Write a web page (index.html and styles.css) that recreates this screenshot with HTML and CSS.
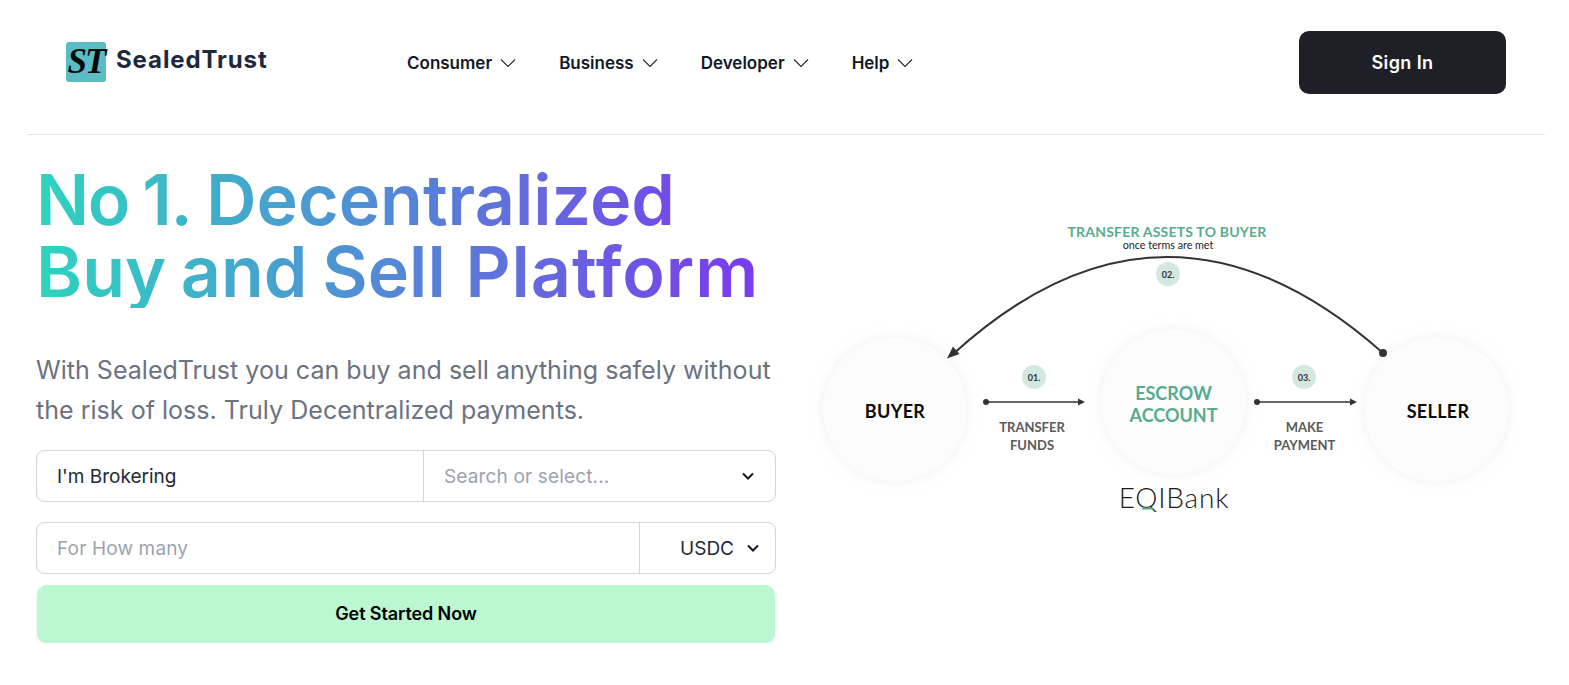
FILE: index.html
```html
<!DOCTYPE html>
<html lang="en">
<head>
    <meta charset="UTF-8">
    <meta name="viewport" content="width=device-width, initial-scale=1.0">
    <title>SealedTrust</title>
    <link rel="stylesheet" href="styles.css">
</head>
<body>
    <header class="header">
        <a class="brand" href="#">
            <span class="brand-mark">ST</span>
            <span class="brand-name">SealedTrust</span>
        </a>
        <nav class="nav">
            <a class="nav-item" href="#">Consumer
                <svg class="nav-chevron" viewBox="0 0 16 16"><path d="M1 4.5l7 7 7-7"/></svg>
            </a>
            <a class="nav-item" href="#">Business
                <svg class="nav-chevron" viewBox="0 0 16 16"><path d="M1 4.5l7 7 7-7"/></svg>
            </a>
            <a class="nav-item" href="#">Developer
                <svg class="nav-chevron" viewBox="0 0 16 16"><path d="M1 4.5l7 7 7-7"/></svg>
            </a>
            <a class="nav-item" href="#">Help
                <svg class="nav-chevron" viewBox="0 0 16 16"><path d="M1 4.5l7 7 7-7"/></svg>
            </a>
        </nav>
        <button class="sign-in">Sign In</button>
    </header>

    <main class="hero">
        <section class="hero-left">
            <h1 class="hero-title"><span class="title-tight">No 1.</span> Decentralized<br>Buy and Sell <span class="title-wide">Platform</span></h1>
            <p class="hero-text">With SealedTrust you can buy and sell anything safely without the risk of loss. Truly Decentralized payments.</p>

            <div class="field-row">
                <input class="field-input field-half" type="text" value="I'm Brokering">
                <div class="field-select">
                    <input class="field-input" type="text" placeholder="Search or select...">
                    <svg class="select-chevron" viewBox="0 0 14 14"><path d="M2 4.5l5 5 5-5"/></svg>
                </div>
            </div>
            <div class="field-row field-row-second">
                <input class="field-input" type="text" placeholder="For How many">
                <div class="field-currency">USDC
                    <svg class="select-chevron" viewBox="0 0 14 14"><path d="M2 4.5l5 5 5-5"/></svg>
                </div>
            </div>
            <button class="start-btn">Get Started Now</button>
        </section>

        <svg class="diagram" viewBox="810 210 710 310">
            <defs>
                <filter id="soft" x="-20%" y="-20%" width="140%" height="140%">
                    <feDropShadow dx="0" dy="0" stdDeviation="6" flood-color="#d8ebe5" flood-opacity="0.6"/>
                </filter>
            </defs>

            <circle class="node" cx="895" cy="409.5" r="72"/>
            <circle class="node" cx="1173.5" cy="402" r="72.5"/>
            <circle class="node" cx="1436.5" cy="409.5" r="72"/>

            <path class="line-arc" d="M952 355Q1165 160 1383 353"/>
            <path class="line-head" d="M947 358.5l6-12 6.500 7.500z"/>
            <circle class="line-head" cx="1383" cy="353" r="4"/>

            <path class="line-flow" d="M986 402H1081"/>
            <circle class="line-head" cx="986" cy="402" r="3"/>
            <path class="line-head" d="M1085 402l-7-3.500v7z"/>

            <path class="line-flow" d="M1257 402H1353"/>
            <circle class="line-head" cx="1257" cy="402" r="3"/>
            <path class="line-head" d="M1357 402l-7-3.500v7z"/>

            <circle class="badge" cx="1034" cy="377" r="12"/>
            <circle class="badge" cx="1168" cy="274" r="12"/>
            <circle class="badge" cx="1304" cy="377" r="12"/>
            <text class="badge-text" x="1034" y="380.500">01.</text>
            <text class="badge-text" x="1168" y="277.500">02.</text>
            <text class="badge-text" x="1304" y="380.500">03.</text>

            <text class="top-label" x="1167" y="237">TRANSFER ASSETS TO BUYER</text>
            <text class="top-sub" x="1168" y="248.500">once terms are met</text>

            <text class="node-label" x="895" y="418">BUYER</text>
            <text class="node-label" x="1438" y="418">SELLER</text>
            <text class="node-green" x="1173.500" y="400">ESCROW</text>
            <text class="node-green" x="1173.500" y="422">ACCOUNT</text>

            <text class="flow-label" x="1032" y="432">TRANSFER</text>
            <text class="flow-label" x="1032" y="450">FUNDS</text>
            <text class="flow-label" x="1304.500" y="432">MAKE</text>
            <text class="flow-label" x="1304.500" y="450">PAYMENT</text>

            <text class="bank-name" x="1174" y="508">EQIBank</text>
            <path class="bank-mark" d="M1142 508.500H1153"/>
        </svg>
    </main>
</body>
</html>
```
FILE: styles.css
```css
* {
    box-sizing: border-box;
}
body {
    margin: 0;
    font-family: Inter, "Liberation Sans", sans-serif;
    color: #1f2937;
    background-color: #fff;
}
.header {
    display: flex;
    align-items: center;
    height: 135px;
    margin: 0 24px 0 27px;
    padding: 0 39px 9px 39px;
    border-bottom: 1px solid #e5e7eb;
}
.brand {
    display: flex;
    align-items: center;
    width: 341px;
    margin-top: -2px;
    text-decoration: none;
}
.brand-mark {
    display: flex;
    align-items: center;
    justify-content: center;
    width: 40px;
    height: 40px;
    border-radius: 3px;
    background-color: #5bbcc4;
    color: #0a0a0a;
    font-family: "Liberation Serif", serif;
    font-style: italic;
    font-weight: bold;
    font-size: 35px;
    letter-spacing: -2px;
}
.brand-name {
    margin-left: 10px;
    padding-bottom: 4px;
    color: #1e293b;
    font-size: 24px;
    font-weight: 700;
    letter-spacing: 0.9px;
}
.nav {
    display: flex;
    gap: 43px;
}
.nav-item {
    display: flex;
    align-items: center;
    gap: 8px;
    color: #111827;
    font-size: 17px;
    font-weight: 600;
    text-decoration: none;
}
.nav-chevron {
    width: 16px;
    height: 16px;
    fill: none;
    stroke: #1f2937;
    stroke-width: 1.1;
}
.sign-in {
    width: 207px;
    height: 63px;
    margin-left: auto;
    border: none;
    border-radius: 10px;
    background-color: #1f1f27;
    color: #fff;
    font-family: inherit;
    font-size: 18px;
    font-weight: 600;
    letter-spacing: 0.4px;
}
.hero {
    display: flex;
    padding-left: 36px;
}
.hero-left {
    width: 740px;
    padding-top: 29px;
}
.hero-title {
    margin: 0;
    width: 722px;
    font-size: 70px;
    font-weight: 600;
    line-height: 72px;
    word-spacing: -3px;
    white-space: nowrap;
    background-image: linear-gradient(to right, #2dd4bf, #7c3aed);
    -webkit-background-clip: text;
    background-clip: text;
    color: transparent;
}
.title-tight {
    letter-spacing: -1.4px;
}
.title-wide {
    margin-left: 5px;
    letter-spacing: 1px;
}
.hero-text {
    margin: 42px 0 0;
    color: #6b7280;
    font-size: 25px;
    line-height: 40px;
    letter-spacing: 0.03px;
}
.field-row {
    display: flex;
    height: 52px;
    margin-top: 20px;
    border: 1px solid #d1d5db;
    border-radius: 8px;
}
.field-input {
    flex: 1;
    min-width: 0;
    padding: 0 20px;
    border: none;
    outline: none;
    background: transparent;
    color: #1f2937;
    font-family: inherit;
    font-size: 19px;
}
.field-input::placeholder {
    color: #9ca3af;
    letter-spacing: 0.15px;
}
.field-half {
    flex: none;
    width: 386px;
}
.field-select {
    display: flex;
    flex: 1;
    min-width: 0;
    align-items: center;
    padding-right: 20px;
    border-left: 1px solid #d1d5db;
}
.field-currency {
    display: flex;
    flex: none;
    align-items: center;
    justify-content: flex-end;
    gap: 12px;
    width: 136px;
    padding-right: 15px;
    border-left: 1px solid #d1d5db;
    font-size: 19px;
}
.select-chevron {
    flex: none;
    width: 14px;
    height: 14px;
    fill: none;
    stroke: #111827;
    stroke-width: 2;
}
.start-btn {
    display: block;
    width: 738px;
    height: 58px;
    margin: 11px 0 0 1px;
    padding-bottom: 3px;
    border: none;
    border-radius: 10px;
    background-color: #bbf7d0;
    box-shadow: 0 1px 3px rgba(0, 0, 0, 0.1);
    color: #000;
    font-family: inherit;
    font-size: 18px;
    font-weight: 600;
    letter-spacing: -0.1px;
}
.diagram {
    flex: none;
    width: 710px;
    height: 310px;
    margin: 75px 0 0 34px;
}
.diagram text {
    font-family: Lato, "Liberation Sans", sans-serif;
    text-anchor: middle;
}
.node {
    fill: #fcfcfc;
    filter: url(#soft);
}
.line-arc {
    fill: none;
    stroke: #333;
    stroke-width: 2;
}
.line-flow {
    fill: none;
    stroke: #333;
    stroke-width: 1.600;
}
.line-head {
    fill: #333;
}
.badge {
    fill: #d3e8e1;
}
.diagram .badge-text {
    fill: #333;
    font-size: 9px;
    font-weight: 700;
}
.diagram .top-label {
    fill: #59ab8f;
    font-size: 14px;
    font-weight: 700;
    letter-spacing: 0.2px;
}
.diagram .top-sub {
    fill: #222;
    font-size: 10.700px;
}
.diagram .node-label {
    fill: #0a0a0a;
    font-size: 18px;
    font-weight: 700;
    letter-spacing: 0.3px;
}
.diagram .node-green {
    fill: #59ab8f;
    font-size: 18px;
    font-weight: 700;
}
.diagram .flow-label {
    fill: #5a5a5a;
    font-size: 13px;
    font-weight: 700;
}
.diagram .bank-name {
    fill: #1a1a1a;
    font-size: 28px;
    font-weight: 300;
    letter-spacing: 0.8px;
}
.bank-mark {
    stroke: #59ab8f;
    stroke-width: 2;
}
```
